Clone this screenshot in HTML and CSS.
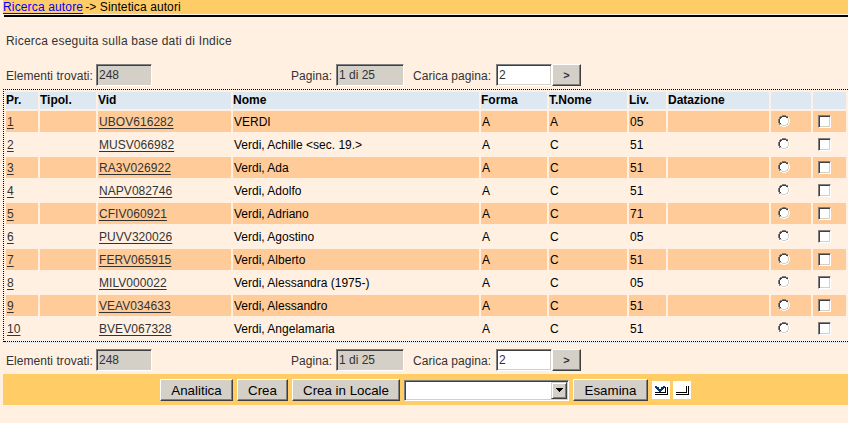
FILE: index.html
```
<!DOCTYPE html>
<html lang="it">
<head>
<meta charset="utf-8">
<title>Sintetica autori</title>
<link rel="stylesheet" href="styles.css">
</head>
<body>
<nav class="crumbs"><a href="#">Ricerca autore</a><span>-&gt; Sintetica autori</span></nav>
<p class="message">Ricerca eseguita sulla base dati di Indice</p>
<div class="pager">
  <label class="found">Elementi trovati:</label><input class="field total" value="248" readonly>
  <label class="page">Pagina:</label><input class="field current" value="1 di 25" readonly>
  <label class="load">Carica pagina:</label><input class="field target" value="2"><button class="btn go">&gt;</button>
</div>
<div class="results">
<table>
<colgroup><col class="c-pr"><col class="c-tipol"><col class="c-vid"><col class="c-nome"><col class="c-forma"><col class="c-tnome"><col class="c-liv"><col class="c-dat"><col class="c-radio"><col class="c-check"></colgroup>
<thead><tr><th>Pr.</th><th>Tipol.</th><th>Vid</th><th>Nome</th><th>Forma</th><th>T.Nome</th><th>Liv.</th><th>Datazione</th><th></th><th></th></tr></thead>
<tbody id="rows"></tbody>
</table>
</div>
<div class="pager bottom">
  <label class="found">Elementi trovati:</label><input class="field total" value="248" readonly>
  <label class="page">Pagina:</label><input class="field current" value="1 di 25" readonly>
  <label class="load">Carica pagina:</label><input class="field target" value="2"><button class="btn go">&gt;</button>
</div>
<div class="toolbar">
  <button class="btn analitica">Analitica</button>
  <button class="btn crea">Crea</button>
  <button class="btn locale">Crea in Locale</button>
  <div class="select"><span class="arrow"><svg width="7" height="4" shape-rendering="crispEdges"><path d="M0 0h7v1H0zM1 1h5v1H1zM2 2h3v1H2zM3 3h1v1H3z"/></svg></span></div>
  <button class="btn esamina">Esamina</button>
  <svg class="icon" width="18" height="18" shape-rendering="crispEdges"><path fill="#fff" d="M0 0h18v18H0z"/><path d="M3 11h11v1H3zM13 6h1v6h-1zM3 13h13v1H3zM15 6h1v8h-1z"/><path fill="#fff" d="M11 7h2v1h-2z"/><path fill="#0a3970" d="M3 5h2v1H3zM11 5h2v1h-2zM3 6h4v1H3zM9 6h4v1H9zM4 7h3v1H4zM9 7h3v1H9zM5 8h6v1H5zM6 9h4v1H6zM7 10h2v1H7z"/></svg>
  <svg class="icon last" width="18" height="18" shape-rendering="crispEdges"><path fill="#fff" d="M0 0h18v18H0z"/><path d="M3 11h11v1H3zM13 5h1v7h-1zM3 13h13v1H3zM15 5h1v9h-1z"/></svg>
</div>
<script src="rows.js"></script>
</body>
</html>
```
FILE: styles.css
```
* { box-sizing: border-box; }
body {
  margin: 0;
  padding-left: 3px;
  height: 423px;
  overflow: hidden;
  background: #fff0e1;
  color: #333;
  font: 12px/14px "Liberation Sans", Arial, sans-serif;
}
.crumbs {
  position: relative;
  height: 17px;
  display: flex;
  gap: 2px;
  background: linear-gradient(#fc6 14px, #fff0e1 14px);
  color: #000;
}
.crumbs::after {
  content: "";
  position: absolute;
  left: 1px;
  right: 0;
  top: 15px;
  height: 2px;
  background: #000;
}
.crumbs a { color: #00f; letter-spacing: .15px; text-underline-offset: 2px; }
.crumbs span { letter-spacing: .1px; }
.message { margin: 17px 0 0 3px; height: 14px; letter-spacing: .2px; }
.pager {
  display: flex;
  align-items: center;
  height: 22px;
  margin-top: 16px;
  padding-left: 3px;
}
.found { width: 90px; }
.page { width: 45px; margin-left: 139px; }
.load { width: 83px; margin-left: 9px; }
.pager label { white-space: nowrap; padding-top: 1px; letter-spacing: .05px; }
.field {
  height: 22px;
  padding: 0 2px 1px;
  border: 1px solid;
  border-color: #808080 #fff #fff #808080;
  border-radius: 0;
  background: #d4d0c8;
  color: #333;
  font: 12px "Liberation Sans", Arial, sans-serif;
  box-shadow: inset 1px 1px #404040;
}
.total { width: 56px; }
.current { width: 68px; }
.target { width: 56px; background: #fff; box-shadow: inset 1px 1px #404040, inset -1px -1px #d4d0c8; }
.btn {
  height: 22px;
  padding: 0;
  border: 1px solid;
  border-color: #fff #404040 #404040 #fff;
  border-radius: 0;
  box-shadow: inset -1px -1px #808080;
  background: #d4d0c8;
  color: #000;
  font: 13.333px "Liberation Sans", Arial, sans-serif;
}
.go { width: 29px; font-weight: bold; font-size: 11px; color: #333; }
.results {
  height: 253px;
  margin-top: 3px;
  border: 1px dotted #000;
  border-right: 0;
  border-bottom: 0;
}
.results::after {
  content: "";
  display: block;
  border-top: 1px dotted #000;
  border-bottom: 1px solid #dde8f1;
}
table {
  width: 844px;
  table-layout: fixed;
  border-collapse: separate;
  border-spacing: 2px;
  color: #000;
}
th, td { padding: 0 1px; text-align: left; white-space: nowrap; }
th { height: 17px; padding: 0; background: #dde8f1; line-height: 17px; }
td { height: 21px; padding-top: 2px; line-height: 19px; }
td:nth-child(n+9) { padding-top: 4px; vertical-align: top; }
tbody tr:nth-child(odd) td { background: #fc9; }
td a { color: #333; text-underline-offset: 2px; letter-spacing: .05px; }
.c-pr { width: 32px; }
.c-tipol { width: 56px; }
.c-vid { width: 133px; }
.c-nome { width: 246px; }
.c-forma { width: 66px; }
.c-tnome { width: 78px; }
.c-liv { width: 37px; }
.c-dat { width: 101px; }
.c-radio { width: 40px; }
.c-check { width: 33px; }
.radio { display: block; margin-left: 6px; }
.check {
  display: block;
  width: 13px;
  height: 13px;
  margin-left: 4px;
  border: 1px solid;
  border-color: #808080 #fff #fff #808080;
  background: #fff;
  box-shadow: inset 1px 1px #404040, inset -1px -1px #d4d0c8;
}
.bottom { margin-top: 7px; }
.toolbar {
  display: flex;
  align-items: center;
  gap: 4px;
  height: 31px;
  margin-top: 3px;
  padding: 1px 0 0 157px;
  background: #fc6;
}
.analitica { width: 73px; }
.crea { width: 51px; }
.locale { width: 108px; }
.esamina { width: 75px; }
.select {
  display: flex;
  justify-content: flex-end;
  width: 165px;
  height: 21px;
  padding: 1px;
  border: 1px solid;
  border-color: #808080 #fff #fff #808080;
  background: #fff;
  box-shadow: inset 1px 1px #404040, inset -1px -1px #d4d0c8;
}
.arrow {
  display: flex;
  align-items: center;
  justify-content: center;
  width: 16px;
  border: 1px solid;
  border-color: #d4d0c8 #404040 #404040 #d4d0c8;
  background: #d4d0c8;
  box-shadow: inset 1px 1px #fff, inset -1px -1px #808080;
}
.last { margin-left: -1px; }
```
FILE: rows.js
```
const rows = [
  ["UBOV616282", "VERDI", "A", "05"],
  ["MUSV066982", "Verdi, Achille <sec. 19.>", "C", "51"],
  ["RA3V026922", "Verdi, Ada", "C", "51"],
  ["NAPV082746", "Verdi, Adolfo", "C", "51"],
  ["CFIV060921", "Verdi, Adriano", "C", "71"],
  ["PUVV320026", "Verdi, Agostino", "C", "05"],
  ["FERV065915", "Verdi, Alberto", "C", "51"],
  ["MILV000022", "Verdi, Alessandra (1975-)", "C", "05"],
  ["VEAV034633", "Verdi, Alessandro", "C", "51"],
  ["BVEV067328", "Verdi, Angelamaria", "C", "51"]
];
const radio = '<svg class="radio" width="12" height="12" shape-rendering="crispEdges">' +
  '<path fill="#fff" d="M4 1h4v1h2v2h1v4h-1v2H8v1H4v-1H2V8H1V4h1V2h2z"/>' +
  '<path fill="#808080" d="M4 0h4v1H4zM2 1h2v1H2zM8 1h2v1H8zM1 2h1v2H1zM0 4h1v4H0zM1 8h1v2H1z"/>' +
  '<path fill="#404040" d="M4 1h4v1H4zM2 2h2v1H2zM8 2h2v1H8zM2 3h1v1H2zM1 4h1v4H1zM2 8h1v1H2z"/>' +
  '<path fill="#fff" d="M10 2h1v2h-1zM11 4h1v4h-1zM10 8h1v2h-1zM8 10h2v1H8zM4 11h4v1H4zM2 10h2v1H2z"/>' +
  '<path fill="#d4d0c8" d="M9 3h1v1H9zM10 4h1v4h-1zM9 8h1v1H9zM8 9h2v1H8zM4 10h4v1H4zM2 9h2v1H2z"/></svg>';
const esc = s => s.replace(/</g, "&lt;").replace(/>/g, "&gt;");
document.getElementById("rows").innerHTML = rows.map(([vid, nome, tipo, liv], i) =>
  `<tr><td><a href="#">${i + 1}</a></td><td></td><td><a href="#">${vid}</a></td><td>${esc(nome)}</td><td>A</td><td>${tipo}</td><td>${liv}</td><td></td><td>${radio}</td><td><span class="check"></span></td></tr>`).join("");
```
